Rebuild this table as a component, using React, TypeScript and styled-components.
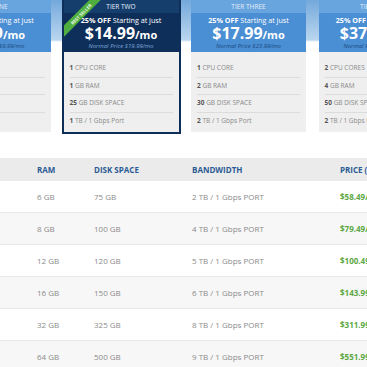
import styled, { createGlobalStyle } from "styled-components"

const GlobalStyle = createGlobalStyle`
  body {
    margin: 0;
    background: #fff;
    font-family: "Open Sans", "Liberation Sans", sans-serif;
    overflow: hidden;
  }
`

interface Tier {
  name: string
  price: string
  normal: string
  features: [string, string][]
  featured?: boolean
}

const tiers: Tier[] = [
  {
    name: "Tier One",
    price: "$7.49",
    normal: "$9.99/mo",
    features: [
      ["1", "CPU CORE"],
      ["512", "MB RAM"],
      ["20", "GB DISK SPACE"],
      ["1", "TB / 1 Gbps Port"],
    ],
  },
  {
    name: "Tier Two",
    price: "$14.99",
    normal: "$19.99/mo",
    featured: true,
    features: [
      ["1", "CPU CORE"],
      ["1", "GB RAM"],
      ["25", "GB DISK SPACE"],
      ["1", "TB / 1 Gbps Port"],
    ],
  },
  {
    name: "Tier Three",
    price: "$17.99",
    normal: "$23.99/mo",
    features: [
      ["1", "CPU CORE"],
      ["2", "GB RAM"],
      ["30", "GB DISK SPACE"],
      ["2", "TB / 1 Gbps Port"],
    ],
  },
  {
    name: "Tier Four",
    price: "$37.49",
    normal: "$49.99/mo",
    features: [
      ["2", "CPU CORES"],
      ["4", "GB RAM"],
      ["50", "GB DISK SPACE"],
      ["2", "TB / 1 Gbps Port"],
    ],
  },
]

const servers = [
  ["6 GB", "75 GB", "2 TB / 1 Gbps PORT", "$58.49/mo"],
  ["8 GB", "100 GB", "4 TB / 1 Gbps PORT", "$79.49/mo"],
  ["12 GB", "120 GB", "5 TB / 1 Gbps PORT", "$100.49/mo"],
  ["16 GB", "150 GB", "6 TB / 1 Gbps PORT", "$143.99/mo"],
  ["32 GB", "325 GB", "8 TB / 1 Gbps PORT", "$311.99/mo"],
  ["64 GB", "500 GB", "9 TB / 1 Gbps PORT", "$551.99/mo"],
]

const Page = styled.div`
  width: 367px;
  height: 367px;
  overflow: hidden;
`

const Plans = styled.section`
  background: linear-gradient(to bottom, #74a9db 0px, #bad6ef 40px, #fff 42px);
  padding-bottom: 26px;
`

const CardRow = styled.div`
  display: flex;
  gap: 12.5px;
  margin-left: -64px;
  align-items: flex-start;
`

const Card = styled.div<{ $featured?: boolean }>`
  position: relative;
  flex: 0 0 115px;
  background: #efefef;
  overflow: hidden;
  box-shadow: ${({ $featured }) => ($featured ? "0 0 0 2px #0e2f5a" : "none")};
`

const TierName = styled.div<{ $featured?: boolean }>`
  height: 13px;
  line-height: 13px;
  font-size: 6.5px;
  text-transform: uppercase;
  text-align: center;
  color: #e4effa;
  background: ${({ $featured }) => ($featured ? "#163e6c" : "#68a4dd")};
`

const PriceBox = styled.div<{ $featured?: boolean }>`
  box-sizing: border-box;
  height: 39px;
  padding-top: 3px;
  text-align: center;
  color: #fff;
  white-space: nowrap;
  background: ${({ $featured }) => ($featured ? "#0e2f5a" : "#4a8ed4")};
`

const Offer = styled.div`
  font-size: 7.2px;
  line-height: 9px;

  strong {
    font-weight: 700;
  }
`

const Amount = styled.div`
  font-size: 16px;
  font-weight: 700;
  line-height: 16px;

  small {
    font-size: 11px;
  }
`

const Normal = styled.div<{ $featured?: boolean }>`
  font-size: 6px;
  line-height: 7px;
  font-style: italic;
  color: ${({ $featured }) => ($featured ? "#7ea6d6" : "#1c4a80")};
`

const Features = styled.ul`
  list-style: none;
  margin: 0;
  padding: 8px 6px 3px;
`

const Feature = styled.li`
  height: 16.5px;
  line-height: 16.5px;
  font-size: 6.5px;
  color: #8a8a8a;
  white-space: nowrap;
  border-bottom: 1px solid #dcdcdc;

  &:last-child {
    border-bottom: none;
  }

  b {
    color: #555;
  }
`

const Ribbon = styled.div`
  position: absolute;
  top: 10px;
  left: -13px;
  width: 60px;
  height: 8px;
  line-height: 8px;
  background: #4fae3f;
  color: #e8f7e4;
  font-size: 4.5px;
  font-weight: 700;
  text-align: center;
  text-transform: uppercase;
  transform: rotate(-45deg);
`

const Table = styled.div`
  font-size: 8px;
  color: #8b8b8b;
`

const Row = styled.div<{ $head?: boolean; $shade?: boolean }>`
  display: grid;
  grid-template-columns: 57px 98px 148px 1fr;
  padding-left: 37px;
  height: ${({ $head }) => ($head ? "23px" : "31px")};
  align-items: center;
  white-space: nowrap;
  background: ${({ $head, $shade }) => ($head ? "#ebebeb" : $shade ? "#f7f7f7" : "#fff")};
  border-bottom: ${({ $head }) => ($head ? "none" : "1px solid #e8e8e8")};
  color: ${({ $head }) => ($head ? "#2b5b94" : "#8b8b8b")};
  font-weight: ${({ $head }) => ($head ? 700 : 400)};
`

const Price = styled.span`
  color: #5ba845;
  font-weight: 700;
`

export default function App() {
  return (
    <Page>
      <GlobalStyle />
      <Plans>
        <CardRow>
          {tiers.map((t) => (
            <Card key={t.name} $featured={t.featured}>
              <TierName $featured={t.featured}>{t.name}</TierName>
              <PriceBox $featured={t.featured}>
                <Offer>
                  <strong>25% OFF</strong> Starting at just
                </Offer>
                <Amount>
                  {t.price}
                  <small>/mo</small>
                </Amount>
                <Normal $featured={t.featured}>Normal Price {t.normal}</Normal>
              </PriceBox>
              <Features>
                {t.features.map(([n, label]) => (
                  <Feature key={label}>
                    <b>{n}</b> {label}
                  </Feature>
                ))}
              </Features>
              {t.featured && <Ribbon>Best Seller</Ribbon>}
            </Card>
          ))}
        </CardRow>
      </Plans>
      <Table>
        <Row $head>
          <span>RAM</span>
          <span>DISK SPACE</span>
          <span>BANDWIDTH</span>
          <span>PRICE (MONTHLY)</span>
        </Row>
        {servers.map((s, i) => (
          <Row key={s[0]} $shade={i % 2 === 1}>
            <span>{s[0]}</span>
            <span>{s[1]}</span>
            <span>{s[2]}</span>
            <Price>{s[3]}</Price>
          </Row>
        ))}
      </Table>
    </Page>
  )
}
